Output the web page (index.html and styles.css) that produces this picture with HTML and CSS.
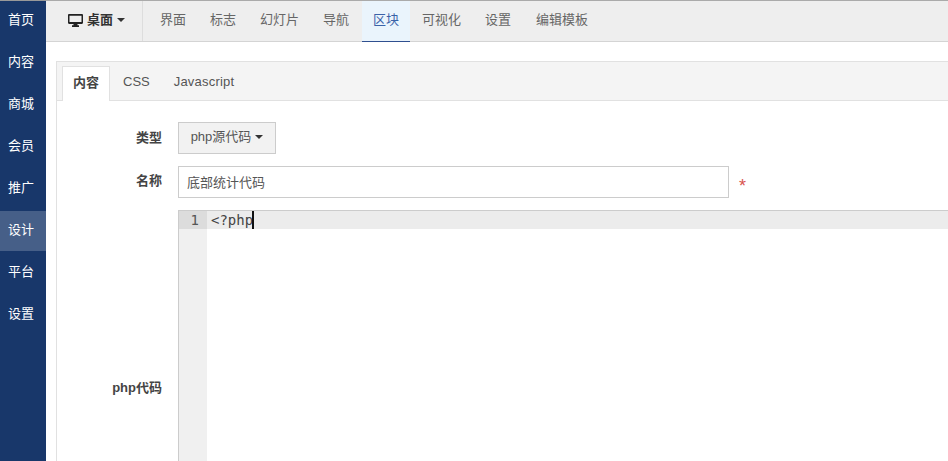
FILE: index.html
```html
<!DOCTYPE html>
<html lang="zh">
<head>
<meta charset="utf-8">
<title>区块</title>
<link rel="stylesheet" href="styles.css">
</head>
<body>
<div class="app">
  <nav class="side">
    <a class="side-item">首页</a>
    <a class="side-item">内容</a>
    <a class="side-item">商城</a>
    <a class="side-item">会员</a>
    <a class="side-item">推广</a>
    <a class="side-item active">设计</a>
    <a class="side-item">平台</a>
    <a class="side-item">设置</a>
  </nav>
  <main class="main">
    <header class="topbar">
      <div class="device">
        <svg class="monitor" viewBox="0 0 15 13" width="15" height="13"><path d="M1.2 0h12.6c.7 0 1.2.5 1.2 1.2v7.600c0 .7-.5 1.200-1.200 1.200H9.500v1.200h1.500V13H4v-1.800h1.500V10H1.200C.5 10 0 9.500 0 8.800V1.200C0 .5.500 0 1.200 0zm.3 1.700v6.400h12V1.700z"/></svg>
        <span class="device-name">桌面</span><i class="caret"></i>
      </div>
      <a class="top-link">界面</a>
      <a class="top-link">标志</a>
      <a class="top-link">幻灯片</a>
      <a class="top-link">导航</a>
      <a class="top-link current">区块</a>
      <a class="top-link">可视化</a>
      <a class="top-link">设置</a>
      <a class="top-link last">编辑模板</a>
    </header>
    <section class="panel">
      <div class="tabs">
        <a class="tab selected">内容</a>
        <a class="tab">CSS</a>
        <a class="tab js">Javascript</a>
      </div>
      <div class="form">
        <div class="row row-type">
          <label class="label">类型</label>
          <button class="select-btn">php源代码<i class="caret small"></i></button>
        </div>
        <div class="row row-name">
          <label class="label name-label">名称</label>
          <div class="input">底部统计代码</div>
          <span class="req">*</span>
        </div>
        <div class="row row-code">
          <label class="label code-label">php代码</label>
          <div class="editor">
            <div class="gutter"><div class="gutter-num">1</div></div>
            <div class="code"><div class="code-line">&lt;?php<span class="cursor"></span></div></div>
          </div>
        </div>
      </div>
    </section>
  </main>
</div>
</body>
</html>
```

FILE: styles.css
```css
* { box-sizing: border-box; }
html, body { margin: 0; height: 100%; overflow: hidden; }
body {
  background: #fff;
  color: #555;
  font-family: "Liberation Sans", "Noto Sans CJK SC", sans-serif;
  font-size: 13px;
}
.app { display: flex; height: 461px; width: 948px; }
.side {
  width: 46px;
  flex: none;
  background: #18376a;
  border-top: 1px solid #999;
  display: flex;
  flex-direction: column;
  gap: 2px;
}
.side-item {
  height: 40px;
  line-height: 38px;
  padding-right: 4px;
  text-align: center;
  color: #fff;
  font-size: 13px;
}
.side-item.active { background: #465f88; }
.main { flex: 1; min-width: 0; display: flex; flex-direction: column; }
.topbar {
  height: 42px;
  flex: none;
  display: flex;
  background: #eee;
  border-top: 1px solid #aaa;
  border-bottom: 1px solid #d4d4d4;
}
.device {
  width: 97px;
  display: flex;
  align-items: center;
  padding-left: 22px;
  padding-bottom: 2px;
  border-right: 1px solid #ddd;
  color: #333;
  font-weight: bold;
  font-size: 13px;
}
.monitor { fill: #222; margin-right: 4px; flex: none; }
.device-name { line-height: 16px; }
.caret {
  display: inline-block;
  width: 0;
  height: 0;
  border-left: 4px solid transparent;
  border-right: 4px solid transparent;
  border-top: 4px solid #333;
  margin-left: 4px;
}
.caret.small { margin-left: 4px; vertical-align: 2px; }
.top-link {
  padding: 0 12px;
  line-height: 38px;
  color: #666;
  font-size: 13px;
  white-space: nowrap;
}
.top-link:first-of-type { margin-left: 5px; }
.top-link.last { margin-left: 1px; }
.top-link.current {
  color: #3a62a8;
  background: #eaf4fc;
  border-bottom: 1px solid #2f4f8f;
  height: 41px;
  width: 48px;
  margin-left: 1px;
  padding: 0;
  text-align: center;
}
.panel {
  flex: 1;
  margin: 19px 0 0 10px;
  border: 1px solid #e1e1e1;
  border-right: 0;
  border-bottom: 0;
  display: flex;
  flex-direction: column;
  min-height: 0;
}
.tabs {
  height: 39px;
  flex: none;
  background: #f4f4f4;
  border-bottom: 1px solid #e1e1e1;
  display: flex;
  padding: 4px 0 0 5px;
}
.tab {
  height: 35px;
  line-height: 31px;
  padding: 0 13px;
  font-size: 13px;
  color: #555;
  white-space: nowrap;
}
.tab.selected {
  width: 48px;
  padding: 0;
  text-align: center;
  background: #fff;
  color: #444;
  border: 1px solid #e1e1e1;
  border-bottom: 0;
  font-weight: bold;
}
.tab.js { padding-left: 11px; letter-spacing: 0.2px; }
.form { flex: 1; padding-top: 21px; display: flex; flex-direction: column; min-height: 0; }
.row { display: flex; }
.label {
  width: 105px;
  flex: none;
  text-align: right;
  color: #444;
  font-weight: bold;
  font-size: 13px;
}
.row-type { height: 44px; align-items: flex-start; }
.row-type .label { line-height: 32px; }
.select-btn {
  margin: 0 0 0 16px;
  width: 98px;
  height: 32px;
  padding: 0 0 5px;
  background: #f2f2f2;
  border: 1px solid #ccc;
  color: #555;
  font: 13px "Liberation Sans", "Noto Sans CJK SC", sans-serif;
}
.row-name { height: 44px; align-items: flex-start; }
.name-label { line-height: 30px; }
.input {
  margin-left: 16px;
  width: 551px;
  height: 32px;
  border: 1px solid #ccc;
  line-height: 32px;
  padding-left: 8px;
  color: #555;
  font-size: 13px;
}
.req {
  color: #d9534f;
  margin-left: 10px;
  font-size: 18px;
  line-height: 41px;
  font-family: "Liberation Sans", sans-serif;
}
.row-code { flex: 1; min-height: 0; }
.code-label { align-self: flex-start; margin-top: 169px; line-height: 18px; }
.editor {
  margin-left: 16px;
  flex: 1;
  display: flex;
  border-top: 1px solid #ccc;
  border-left: 1px solid #ccc;
  font-family: "DejaVu Sans Mono", monospace;
  font-size: 14px;
  line-height: 18px;
}
.gutter { width: 28px; flex: none; background: #f0f0f0; }
.gutter-num { background: #dcdcdc; text-align: right; padding-right: 8px; color: #555; height: 18px; }
.code { flex: 1; min-width: 0; }
.code-line { background: #ececec; height: 18px; padding-left: 4px; color: #444; display: flex; }
.cursor { width: 2px; height: 18px; background: #111; display: inline-block; margin-left: -1px; }
```
